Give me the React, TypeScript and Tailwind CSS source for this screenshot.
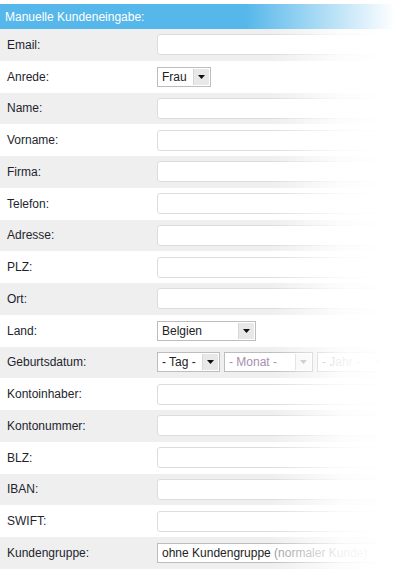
import React from "react";

const font = { fontFamily: '"Liberation Sans", Arial, sans-serif' };

function Arrow({ light = false }: { light?: boolean }) {
  return (
    <span className={`flex h-full w-[16px] items-center justify-center border-l border-[#d8d8d8] ${light ? "bg-[#f7f7f7]" : "bg-[#e8e8e8]"}`}>
      <svg width="7" height="4" viewBox="0 0 7 4">
        <path d="M0 0H7L3.5 4Z" fill={light ? "#b0b0b0" : "#111"} />
      </svg>
    </span>
  );
}

function Select({ label, width, light = false }: { label: string; width: number; light?: boolean }) {
  return (
    <div
      className="flex h-[20px] shrink-0 items-center border border-[#bdbdbd] bg-white pl-[4px] pr-[1px]"
      style={{ width }}
    >
      <span className={`flex-1 whitespace-nowrap text-[12px] ${light ? "text-[#a58fb0]" : "text-[#222]"}`}>{label}</span>
      <div className="h-[16px]">
        <Arrow light={light} />
      </div>
    </div>
  );
}

function Input() {
  return <div className="h-[21px] w-[260px] shrink-0 rounded-[3px] border border-[#dcdcdc] bg-white" />;
}

const rows: { label: string; field: React.ReactNode }[] = [
  { label: "Email:", field: <Input /> },
  { label: "Anrede:", field: <Select label="Frau" width={54} /> },
  { label: "Name:", field: <Input /> },
  { label: "Vorname:", field: <Input /> },
  { label: "Firma:", field: <Input /> },
  { label: "Telefon:", field: <Input /> },
  { label: "Adresse:", field: <Input /> },
  { label: "PLZ:", field: <Input /> },
  { label: "Ort:", field: <Input /> },
  { label: "Land:", field: <Select label="Belgien" width={99} /> },
  {
    label: "Geburtsdatum:",
    field: (
      <div className="flex gap-[4px]">
        <Select label="- Tag -" width={63} />
        <Select label="- Monat -" width={89} light />
        <Select label="- Jahr -" width={70} light />
      </div>
    ),
  },
  { label: "Kontoinhaber:", field: <Input /> },
  { label: "Kontonummer:", field: <Input /> },
  { label: "BLZ:", field: <Input /> },
  { label: "IBAN:", field: <Input /> },
  { label: "SWIFT:", field: <Input /> },
  {
    label: "Kundengruppe:",
    field: (
      <div className="flex h-[20px] w-[260px] shrink-0 items-center border border-[#bdbdbd] bg-white pl-[4px]">
        <span className="whitespace-nowrap text-[12px] text-[#222]">
          ohne Kundengruppe <span className="text-[#999]">(normaler Kunde)</span>
        </span>
      </div>
    ),
  },
];

export default function App() {
  return (
    <div className="relative h-[572px] w-[400px] overflow-hidden bg-white pt-[4px]" style={font}>
      <div className="flex h-[25px] items-center bg-[linear-gradient(to_right,#56b7ea_0px,#56b7ea_245px,#ffffff_395px)] pl-[5px] text-[12px] text-white">
        Manuelle Kundeneingabe:
      </div>
      {rows.map((r, i) => (
        <div
          key={r.label}
          className={`flex h-[31.75px] items-center ${i % 2 === 0 ? "bg-[#efefef]" : "bg-white"}`}
        >
          <div className="w-[157px] shrink-0 pl-[7px] text-[12px] text-[#231f2e]">{r.label}</div>
          <div className="flex min-w-0 flex-1 overflow-hidden">{r.field}</div>
        </div>
      ))}
      <div className="pointer-events-none absolute bottom-0 right-0 top-[29px] w-[130px] bg-[linear-gradient(to_right,rgba(255,255,255,0)_0%,rgba(255,255,255,0.85)_55%,#ffffff_90%)]" />
    </div>
  );
}
